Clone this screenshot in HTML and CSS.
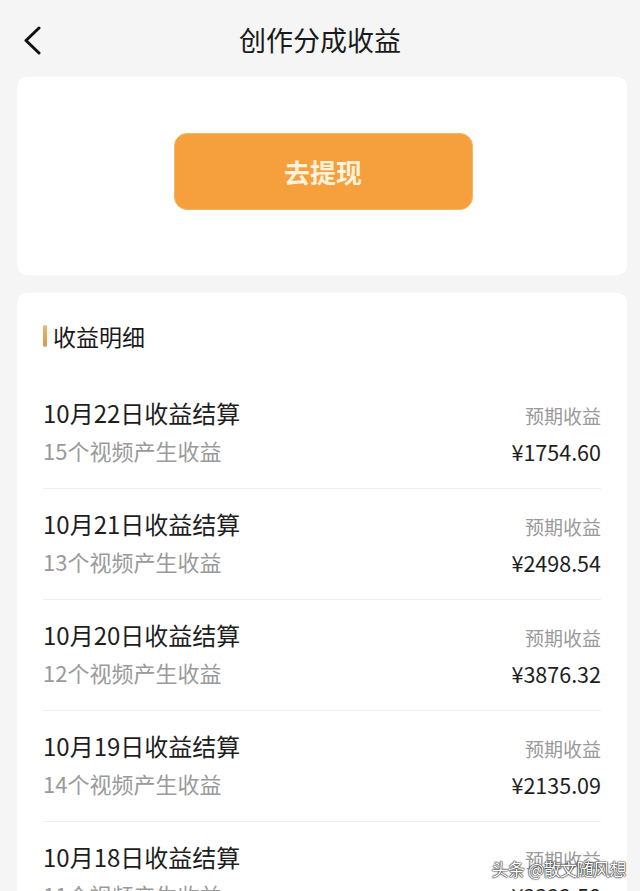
FILE: index.html
```html
<!DOCTYPE html>
<html lang="zh-CN">
<head>
    <meta charset="UTF-8">
    <title>创作分成收益</title>
    <link rel="stylesheet" href="styles.css">
</head>
<body>
<header class="header">
    <a class="back" href="#">
        <svg width="20" height="30" viewBox="0 0 20 30">
            <polyline points="16,2 3,14.5 16,27" fill="none" stroke="#111" stroke-width="3" stroke-linecap="round" stroke-linejoin="round"/>
        </svg>
    </a>
    <h1 class="title">创作分成收益</h1>
</header>

<!--提现-->
<section class="card card_withdraw">
    <a class="btn_withdraw" href="#">去提现</a>
</section>

<!--收益明细-->
<section class="card card_detail">
    <h2 class="detail_head">收益明细</h2>
    <ul class="detail_list">
        <li class="detail_item">
            <div class="item_left">
                <p class="item_title">10月22日收益结算</p>
                <p class="item_sub">15个视频产生收益</p>
            </div>
            <div class="item_right">
                <p class="item_label">预期收益</p>
                <p class="item_money">¥1754.60</p>
            </div>
        </li>
        <li class="detail_item">
            <div class="item_left">
                <p class="item_title">10月21日收益结算</p>
                <p class="item_sub">13个视频产生收益</p>
            </div>
            <div class="item_right">
                <p class="item_label">预期收益</p>
                <p class="item_money">¥2498.54</p>
            </div>
        </li>
        <li class="detail_item">
            <div class="item_left">
                <p class="item_title">10月20日收益结算</p>
                <p class="item_sub">12个视频产生收益</p>
            </div>
            <div class="item_right">
                <p class="item_label">预期收益</p>
                <p class="item_money">¥3876.32</p>
            </div>
        </li>
        <li class="detail_item">
            <div class="item_left">
                <p class="item_title">10月19日收益结算</p>
                <p class="item_sub">14个视频产生收益</p>
            </div>
            <div class="item_right">
                <p class="item_label">预期收益</p>
                <p class="item_money">¥2135.09</p>
            </div>
        </li>
        <li class="detail_item">
            <div class="item_left">
                <p class="item_title">10月18日收益结算</p>
                <p class="item_sub">11个视频产生收益</p>
            </div>
            <div class="item_right">
                <p class="item_label">预期收益</p>
                <p class="item_money">¥2322.58</p>
            </div>
        </li>
    </ul>
</section>

<div class="watermark">头条 @散文随风想</div>
</body>
</html>
```

FILE: styles.css
```css
*{
    margin: 0;
    padding: 0;
    box-sizing: border-box;
}
html, body{
    height: 891px;
    overflow: hidden;
}
body{
    position: relative;
    background-color: #f5f5f5;
    font-family: "Noto Sans CJK SC", "Noto Sans", sans-serif;
    color: #222222;
}
ul{
    list-style: none;
}
a{
    text-decoration: none;
}
.header{
    position: relative;
    height: 77px;
    padding-top: 3px;
    display: flex;
    align-items: center;
    justify-content: center;
}
.back{
    position: absolute;
    left: 23px;
    top: 26px;
    display: block;
    width: 20px;
    height: 30px;
}
.title{
    font-size: 27px;
    font-weight: 400;
    color: #1a1a1a;
    line-height: 40px;
}
.card{
    margin: 0 13px 0 17px;
    background-color: #FFFFFF;
    border-radius: 10px;
}
.card_withdraw{
    height: 198px;
    padding-top: 56px;
    display: flex;
    justify-content: center;
    align-items: flex-start;
}
.btn_withdraw{
    display: flex;
    align-items: center;
    justify-content: center;
    width: 299px;
    height: 77px;
    margin-left: 2px;
    background-color: #f5a03d;
    border: 1px solid #f7b660;
    border-radius: 13px;
    color: #fdf2dc;
    font-size: 26px;
    font-weight: 700;
}
.card_detail{
    margin-top: 18px;
    padding: 28px 26px 0 26px;
    border-radius: 10px 10px 0 0;
}
.detail_head{
    position: relative;
    height: 30px;
    line-height: 30px;
    padding-left: 10px;
    font-size: 23px;
    font-weight: 400;
    color: #1a1a1a;
}
.detail_head::before{
    content: "";
    position: absolute;
    left: 0;
    top: 4px;
    width: 4px;
    height: 22px;
    border-radius: 2px;
    background: linear-gradient(#e9b86a, #d39a4f);
}
.detail_list{
    margin-top: 27px;
}
.detail_item{
    display: flex;
    justify-content: space-between;
    padding: 18px 0 17px 0;
    border-bottom: 1px solid #efefef;
}
.item_title{
    font-size: 24px;
    line-height: 34px;
    color: #1e1e1e;
}
.item_sub{
    font-size: 22px;
    line-height: 40px;
    color: #9a9a9a;
}
.item_right{
    padding-top: 3px;
    text-align: right;
}
.item_label{
    font-size: 19px;
    line-height: 34px;
    color: #9a9a9a;
}
.item_money{
    font-size: 21.5px;
    line-height: 38px;
    color: #1e1e1e;
}
.watermark{
    position: absolute;
    right: 14px;
    bottom: 10px;
    font-size: 17px;
    line-height: 24px;
    letter-spacing: -0.5px;
    color: #FFFFFF;
    text-shadow: 0 0 2px #222222, 0 0 1px #222222, 0 0 1px #222222;
}
```
